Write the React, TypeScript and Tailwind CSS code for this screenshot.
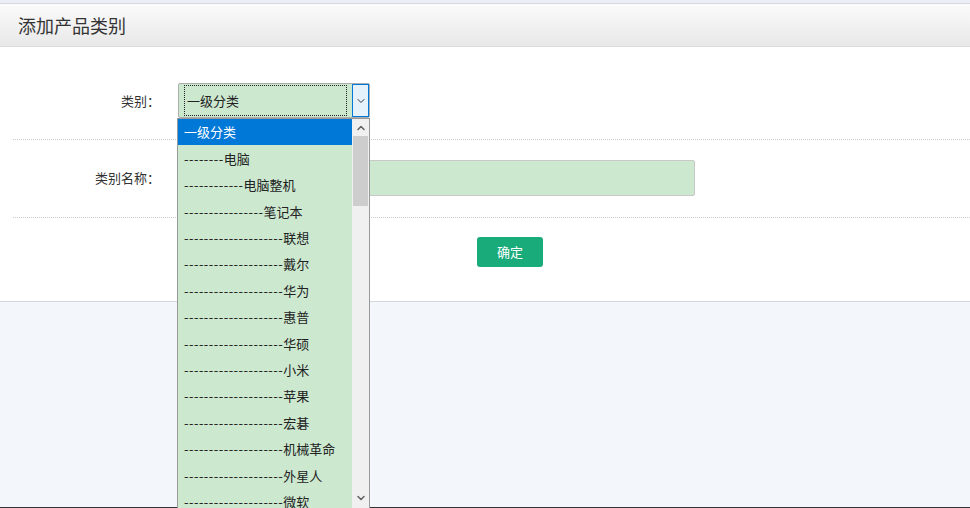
import { ChevronDown, ChevronUp } from "lucide-react";

const font = "font-['Microsoft_YaHei','Noto_Sans_CJK_SC',sans-serif]";

const options: { dashes: number; label: string }[] = [
  { dashes: 0, label: "一级分类" },
  { dashes: 8, label: "电脑" },
  { dashes: 12, label: "电脑整机" },
  { dashes: 16, label: "笔记本" },
  { dashes: 20, label: "联想" },
  { dashes: 20, label: "戴尔" },
  { dashes: 20, label: "华为" },
  { dashes: 20, label: "惠普" },
  { dashes: 20, label: "华硕" },
  { dashes: 20, label: "小米" },
  { dashes: 20, label: "苹果" },
  { dashes: 20, label: "宏碁" },
  { dashes: 20, label: "机械革命" },
  { dashes: 20, label: "外星人" },
  { dashes: 20, label: "微软" },
];

function Dropdown() {
  return (
    <div className="absolute left-[-2px] top-[34px] z-10 flex h-[400px] w-[193px] overflow-hidden border border-[#999] bg-[#cce8cf]">
      <ul className="min-w-0 flex-1">
        {options.map((opt, i) => (
          <li
            key={opt.label}
            className={`flex h-[26.4px] items-center whitespace-nowrap pl-[6px] text-[13px] ${
              i === 0 ? "bg-[#0078d7] text-white" : "text-[#222]"
            }`}
          >
            {opt.dashes > 0 && (
              <span className="tracking-[0.45px]">{"-".repeat(opt.dashes)}</span>
            )}
            <span>{opt.label}</span>
          </li>
        ))}
      </ul>
      <div className="flex w-[17px] shrink-0 flex-col bg-[#f0f0f0]">
        <div className="flex h-[17px] items-center justify-center text-[#606060]">
          <ChevronUp className="h-3 w-3" strokeWidth={3} />
        </div>
        <div className="mx-[1px] h-[70px] bg-[#cdcdcd]" />
        <div className="flex-1" />
        <div className="mb-[11px] flex h-[17px] items-center justify-center text-[#606060]">
          <ChevronDown className="h-3 w-3" strokeWidth={3} />
        </div>
      </div>
    </div>
  );
}

export default function App() {
  return (
    <main className={`flex h-[508px] w-full flex-col overflow-hidden bg-[#f3f6fb] ${font} text-[#333]`}>
      <div className="h-[4px] shrink-0 border-b border-[#d6d8e4] bg-[#eceef5]" />
      <header className="flex h-[43px] shrink-0 items-center border-b border-[#dcdcdc] bg-gradient-to-b from-[#fbfbfb] to-[#e8e8e8] pl-[18px]">
        <h1 className="text-[18px] font-normal text-[#333]">添加产品类别</h1>
      </header>

      <section className="shrink-0 border-b border-[#d4d7dc] bg-white pb-[34px] pt-[36px]">
        <div className="flex items-center pb-[21px]">
          <label className="w-[160px] shrink-0 text-right text-[13px]">类别：</label>
          <div className="relative ml-[18px] flex h-[35px] w-[192px] rounded-[2px] border border-[#adadad] bg-[#cce8cf]">
            <div className="m-[1px] ml-[5px] flex flex-1 items-center border border-dotted border-[#222] pl-[2px] text-[13px] text-[#222]">
              一级分类
            </div>
            <div className="ml-[4px] flex w-[17px] items-center justify-center border border-[#0078d7] bg-[#e5f1fb] text-[#333]">
              <ChevronDown className="h-3 w-3" strokeWidth={2} />
            </div>
            <Dropdown />
          </div>
        </div>
        <div className="ml-[13px] border-t border-dotted border-[#ccc]" />

        <div className="flex items-center pb-[21px] pt-[20px]">
          <label className="w-[160px] shrink-0 text-right text-[13px]">类别名称：</label>
          <input
            type="text"
            className="ml-[18px] h-[36px] w-[517px] rounded-[2px] border border-[#c8c8c8] bg-[#cce8cf] outline-none"
          />
        </div>
        <div className="ml-[13px] border-t border-dotted border-[#ccc]" />

        <div className="pt-[19px]">
          <button
            type="button"
            className="ml-[477px] flex h-[30px] w-[66px] items-center justify-center rounded-[3px] bg-[#1aab7b] text-[13px] text-white"
          >
            确定
          </button>
        </div>
      </section>

      <div className="flex-1" />
      <div className="h-[1px] shrink-0 bg-[#333]" />
    </main>
  );
}
